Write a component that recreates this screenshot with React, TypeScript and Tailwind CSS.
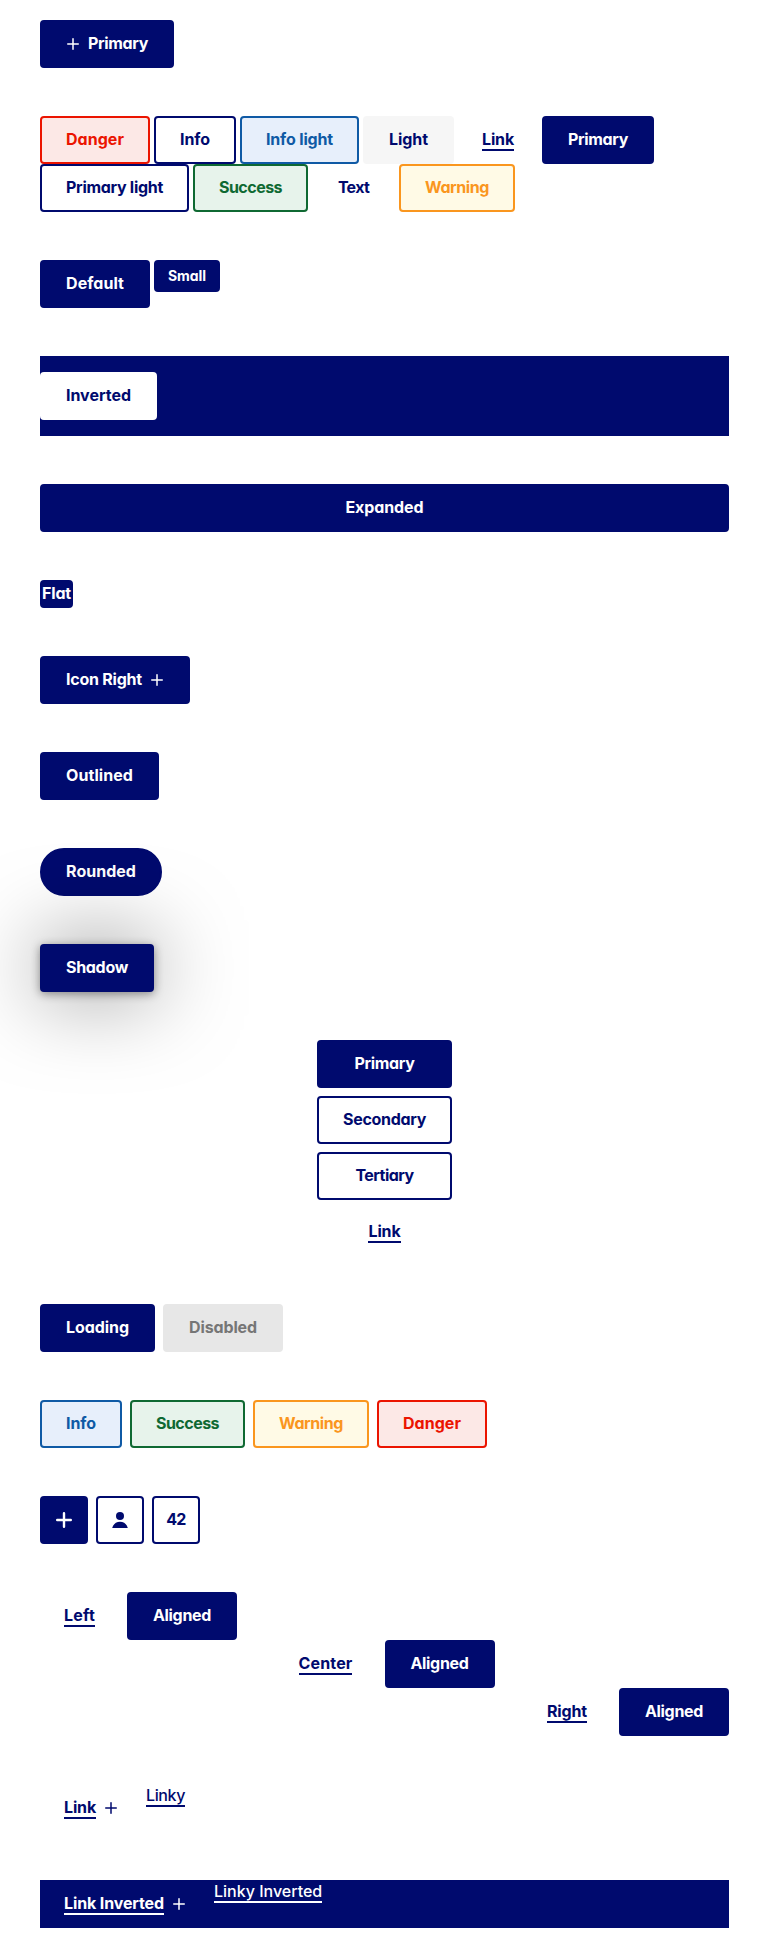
import type { ReactNode } from "react";
import clsx from "clsx";

const tones = {
  primary: "border-[#000a6e] bg-[#000a6e] text-white",
  outline: "border-[#000a6e] bg-white text-[#000a6e]",
  danger: "border-[#eb1400] bg-[#fce8e6] text-[#eb1400]",
  info: "border-[#0f5aa5] bg-[#e7effb] text-[#0f5aa5]",
  success: "border-[#0f6932] bg-[#e7f3eb] text-[#0f6932]",
  warning: "border-[#fa961e] bg-[#fffae6] text-[#fa961e]",
  light: "border-[#f6f6f6] bg-[#f6f6f6] text-[#000a6e]",
  disabled: "border-[#e7e7e7] bg-[#e7e7e7] text-[#767676]",
  inverted: "border-white bg-white text-[#000a6e]",
  text: "border-transparent text-[#000a6e]",
  textInverted: "border-transparent text-white",
};

type ButtonProps = {
  tone?: keyof typeof tones;
  className?: string;
  shape?: string;
  link?: boolean;
  before?: ReactNode;
  after?: ReactNode;
  children?: ReactNode;
};

function Label({ link, children }: { link?: boolean; children: ReactNode }) {
  return (
    <span
      className={clsx(
        "block h-[22px] border-b-2 leading-5 whitespace-nowrap",
        link ? "border-current" : "border-transparent",
      )}
    >
      {children}
    </span>
  );
}

function Button({ tone = "primary", className, shape = "h-12 rounded-[4px]", link, before, after, children }: ButtonProps) {
  return (
    <button
      className={clsx(
        "flex shrink-0 items-center justify-center gap-2 border-2 font-bold",
        tones[tone],
        shape,
        className,
      )}
    >
      {before}
      {children && <Label link={link}>{children}</Label>}
      {after}
    </button>
  );
}

function Plus() {
  return (
    <svg className="size-3.5" viewBox="0 0 14 14" fill="none" stroke="currentColor" strokeWidth="1.5" strokeLinecap="round">
      <path d="M7 1.75v10.5M1.75 7h10.5" />
    </svg>
  );
}

function PlusLarge() {
  return (
    <svg className="size-4" viewBox="0 0 16 16" fill="none" stroke="currentColor" strokeWidth="2.4" strokeLinecap="round">
      <path d="M8 1.2v13.600M1.200 8h13.600" />
    </svg>
  );
}

function Person() {
  return (
    <svg className="size-4" viewBox="0 0 16 16" fill="currentColor">
      <circle cx="8" cy="4" r="4" />
      <path d="M.2 16C1.2 12 4.3 9.8 8 9.8s6.800 2.200 7.800 6.200z" />
    </svg>
  );
}

export default function App() {
  return (
    <main className="flex flex-col gap-12 bg-white px-10 py-5 font-['Inter',sans-serif] text-base [font-feature-settings:'cv11']">
      <section className="flex">
        <Button className="w-[134px] tracking-[-0.37px]" before={<Plus />}>Primary</Button>
      </section>

      <section className="flex flex-wrap gap-x-1">
        <Button tone="danger" className="w-[110px] tracking-[0.03px]">Danger</Button>
        <Button tone="outline" className="w-[82px] tracking-[-0.1px]">Info</Button>
        <Button tone="info" className="w-[119px] tracking-[-0.17px]">Info light</Button>
        <Button tone="light" className="w-[91px] tracking-[-0.1px]">Light</Button>
        <Button tone="text" link className="w-20 tracking-[-0.15px]">Link</Button>
        <Button className="w-[112px] tracking-[-0.37px]">Primary</Button>
        <Button tone="outline" className="w-[149px] tracking-[-0.29px]">Primary light</Button>
        <Button tone="success" className="w-[115px] tracking-[-0.52px]">Success</Button>
        <Button tone="text" className="w-[83px] tracking-[-0.7px]">Text</Button>
        <Button tone="warning" className="w-[116px] tracking-[-0.42px]">Warning</Button>
      </section>

      <section className="flex items-start gap-1">
        <Button className="w-[110px] tracking-[0.05px]">Default</Button>
        <Button shape="h-8 rounded-[4px] pt-0.5" className="w-[66px] text-sm tracking-[-0.06px]">Small</Button>
      </section>

      <section className="flex bg-[#000a6e] py-4">
        <Button tone="inverted" className="w-[117px] tracking-[-0.02px]">Inverted</Button>
      </section>

      <section className="flex">
        <Button className="w-full tracking-[-0.1px]">Expanded</Button>
      </section>

      <section className="flex">
        <Button shape="h-7 rounded-[4px]" className="w-[33px] tracking-[-0.17px]">Flat</Button>
      </section>

      <section className="flex">
        <Button className="w-[150px] tracking-[-0.23px]" after={<Plus />}>Icon Right</Button>
      </section>

      <section className="flex">
        <Button className="w-[119px] tracking-[0.07px]">Outlined</Button>
      </section>

      <section className="flex">
        <Button shape="h-12 rounded-full" className="w-[122px] tracking-[0.02px]">Rounded</Button>
      </section>

      <section className="flex">
        <Button className="w-[114px] tracking-[-0.3px] shadow-[0_0_86px_rgba(0,0,0,0.5),0_2px_10px_rgba(0,0,0,0.4)]">
          Shadow
        </Button>
      </section>

      <section className="mx-auto flex w-[135px] flex-col gap-2">
        <Button className="tracking-[-0.37px]">Primary</Button>
        <Button tone="outline" className="tracking-[-0.31px]">Secondary</Button>
        <Button tone="outline" className="tracking-[-0.55px]">Tertiary</Button>
        <Button tone="text" link className="tracking-[-0.15px]">Link</Button>
      </section>

      <section className="flex gap-2">
        <Button className="w-[115px] tracking-[-0.08px]">Loading</Button>
        <Button tone="disabled" className="w-[120px] tracking-[-0.12px]">Disabled</Button>
      </section>

      <section className="flex gap-2">
        <Button tone="info" className="w-[82px] tracking-[-0.1px]">Info</Button>
        <Button tone="success" className="w-[115px] tracking-[-0.52px]">Success</Button>
        <Button tone="warning" className="w-[116px] tracking-[-0.42px]">Warning</Button>
        <Button tone="danger" className="w-[110px] tracking-[0.03px]">Danger</Button>
      </section>

      <section className="flex gap-2">
        <Button className="w-12" before={<PlusLarge />} />
        <Button tone="outline" className="w-12" before={<Person />} />
        <Button tone="outline" className="w-12 tracking-[-0.6px]">42</Button>
      </section>

      <section className="flex flex-col">
        <div className="flex gap-2">
          <Button tone="text" link className="w-[79px] tracking-[0.2px]">Left</Button>
          <Button className="w-[110px] tracking-[-0.32px]">Aligned</Button>
        </div>
        <div className="flex justify-center gap-2">
          <Button tone="text" link className="w-[102px] tracking-[0.15px]">Center</Button>
          <Button className="w-[110px] tracking-[-0.32px]">Aligned</Button>
        </div>
        <div className="flex justify-end gap-2">
          <Button tone="text" link className="w-[88px] tracking-[-0.15px]">Right</Button>
          <Button className="w-[110px] tracking-[-0.32px]">Aligned</Button>
        </div>
      </section>

      <section className="flex items-start gap-1">
        <Button tone="text" link className="w-[102px] tracking-[-0.15px]" after={<Plus />}>Link</Button>
        <a className="mt-px font-medium tracking-[-0.38px] text-[#000a6e]"><Label link>Linky</Label></a>
      </section>

      <section className="flex items-start gap-1 bg-[#000a6e]">
        <Button tone="textInverted" link className="w-[170px] tracking-[-0.13px]" after={<Plus />}>Link Inverted</Button>
        <a className="mt-px font-medium text-white"><Label link>Linky Inverted</Label></a>
      </section>
    </main>
  );
}
